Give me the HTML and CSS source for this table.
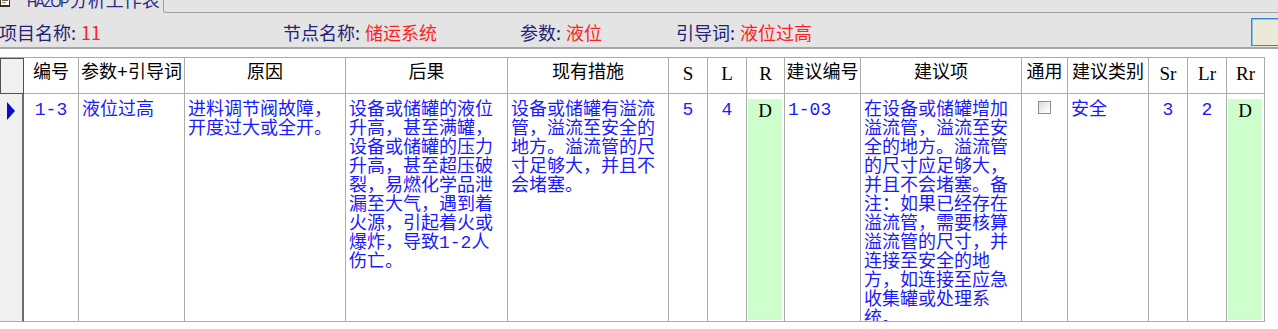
FILE: index.html
```html
<!DOCTYPE html>
<html lang="zh-CN">
<head>
<meta charset="utf-8">
<title>HAZOP分析工作表</title>
<link rel="stylesheet" href="styles.css">
</head>
<body>
<div class="app">
  <div class="tabstrip">
    <div class="tab">
      <svg class="tab-icon" width="11" height="12" viewBox="0 0 11 12">
        <rect x="0.5" y="0.5" width="9" height="10" fill="#ffffff" stroke="#303030"/>
        <rect x="2" y="2" width="6" height="1" fill="#606060"/>
        <rect x="2" y="4" width="6" height="1" fill="#606060"/>
        <rect x="2" y="6" width="4" height="1" fill="#c08020"/>
        <rect x="0" y="9" width="10" height="2" fill="#303030"/>
      </svg>
      <span class="tab-title"><span class="tab-latin">HAZOP</span>分析工作表</span>
    </div>
    <div class="tab-rest"></div>
  </div>

  <div class="infobar">
    <div class="field f-project"><span class="label">项目名称:</span><span class="value">11</span></div>
    <div class="field f-node"><span class="label">节点名称:</span><span class="value">储运系统</span></div>
    <div class="field f-param"><span class="label">参数:</span><span class="value">液位</span></div>
    <div class="field f-guide"><span class="label">引导词:</span><span class="value">液位过高</span></div>
    <div class="infobox"></div>
  </div>

  <div class="grid">
    <div class="cell corner"></div>
    <div class="cell hcell">编号</div>
    <div class="cell hcell">参数+引导词</div>
    <div class="cell hcell">原因</div>
    <div class="cell hcell">后果</div>
    <div class="cell hcell">现有措施</div>
    <div class="cell hcell serif">S</div>
    <div class="cell hcell serif">L</div>
    <div class="cell hcell serif">R</div>
    <div class="cell hcell">建议编号</div>
    <div class="cell hcell">建议项</div>
    <div class="cell hcell">通用</div>
    <div class="cell hcell">建议类别</div>
    <div class="cell hcell serif">Sr</div>
    <div class="cell hcell serif">Lr</div>
    <div class="cell hcell serif">Rr</div>

    <div class="cell indicator">
      <svg width="8" height="18" viewBox="0 0 8 18"><polygon points="0,0 8,9 0,18" fill="#0a0ad0"/></svg>
    </div>
    <div class="cell dcell center">1-3</div>
    <div class="cell dcell">液位过高</div>
    <div class="cell dcell">进料调节阀故障，开度过大或全开。</div>
    <div class="cell dcell">设备或储罐的液位升高，甚至满罐，设备或储罐的压力升高，甚至超压破裂，易燃化学品泄漏至大气，遇到着火源，引起着火或爆炸，导致1-2人伤亡。</div>
    <div class="cell dcell">设备或储罐有溢流管，溢流至安全的地方。溢流管的尺寸足够大，并且不会堵塞。</div>
    <div class="cell dcell center">5</div>
    <div class="cell dcell center">4</div>
    <div class="cell rcell"><div class="green serif">D</div></div>
    <div class="cell dcell">1-03</div>
    <div class="cell dcell">在设备或储罐增加溢流管，溢流至安全的地方。溢流管的尺寸应足够大，并且不会堵塞。备注：如果已经存在溢流管，需要核算溢流管的尺寸，并连接至安全的地方，如连接至应急收集罐或处理系统。</div>
    <div class="cell dcell center"><span class="checkbox"></span></div>
    <div class="cell dcell">安全</div>
    <div class="cell dcell center">3</div>
    <div class="cell dcell center">2</div>
    <div class="cell rcell"><div class="green serif">D</div></div>
  </div>
</div>
</body>
</html>
```

FILE: styles.css
```css
html, body {
  margin: 0;
  padding: 0;
  background: #ffffff;
  overflow: hidden;
}

.app {
  width: 1278px;
  height: 329px;
  overflow: hidden;
  font-family: "Noto Sans CJK SC", "Noto Sans", sans-serif;
}

/* ---------- tab strip ---------- */
.tabstrip {
  display: flex;
  height: 13px;
  background: #e4e4e4;
  overflow: hidden;
}

.tab {
  width: 163px;
  display: flex;
  align-items: flex-start;
  overflow: hidden;
}

.tab-icon {
  display: block;
  margin-top: -4px;
  flex: none;
}

.tab-title {
  margin-left: 16px;
  margin-top: -10px;
  font-size: 18px;
  line-height: 18px;
  color: #2a2a8c;
  white-space: nowrap;
}

.tab-latin {
  font-family: "Liberation Sans", sans-serif;
  font-size: 14px;
  letter-spacing: -1.5px;
  margin-right: 2px;
}

.tab-rest {
  flex: 1;
  border-left: 1px solid #a0a0a0;
  border-bottom: 1px solid #a0a0a0;
  border-bottom-left-radius: 3px;
}

/* ---------- info bar ---------- */
.infobar {
  display: flex;
  align-items: center;
  box-sizing: border-box;
  height: 36px;
  padding-top: 4px;
  background: #e4e4e4;
  border-bottom: 2px solid #a6a6a6;
  font-size: 18px;
  line-height: 22px;
  white-space: nowrap;
}

.field {
  display: flex;
  align-items: center;
  flex: none;
}

.f-project { width: 284px; margin-left: -1px; }
.f-node { width: 237px; }
.f-param { width: 156px; }
.f-guide { flex: 1; }

.label {
  color: #222278;
}

.value {
  color: #ff2222;
  margin-left: 5px;
}

.infobox {
  flex: none;
  box-sizing: border-box;
  width: 30px;
  height: 28px;
  margin-right: -3px;
  background: #ece9d8;
  border: 1px solid #2f8ad6;
  box-shadow: inset 1px 1px 0 #8fc0ea;
}

/* ---------- grid ---------- */
.grid {
  display: grid;
  grid-template-columns: 24px 55px 106px 161px 162px 161px 39px 39px 38px 76px 161px 46px 81px 39px 39px 38px;
  grid-template-rows: 36px 228px;
  width: max-content;
  margin-top: 8px;
  border-top: 1px solid #acacac;
  font-family: "Liberation Mono", "Noto Sans CJK SC", monospace;
  font-size: 18px;
  line-height: 19px;
}

.cell {
  box-sizing: border-box;
  border-right: 1px solid #acacac;
  border-bottom: 1px solid #acacac;
  overflow: hidden;
  background: #ffffff;
}

.corner {
  background: #f0f0f0;
  border: 1px solid #505050;
}

.hcell {
  padding-top: 6px;
  text-align: center;
  color: #000000;
  white-space: nowrap;
}

.serif {
  font-family: "Liberation Serif", "Noto Sans CJK SC", serif;
  font-size: 19px;
}

.indicator {
  background: #f0f0f0;
  border-right: 2px solid #6c6c6c;
  padding: 8px 0 0 7px;
}

.indicator svg {
  display: block;
}

.dcell {
  padding: 7px 6px 0 3px;
  color: #1a1aff;
}

.dcell.center {
  padding-left: 0;
  padding-right: 0;
  text-align: center;
}

.rcell {
  padding: 5px 2px 1px 1px;
}

.green {
  box-sizing: border-box;
  height: 100%;
  padding-top: 2px;
  background: #ccffcc;
  color: #000000;
  text-align: center;
}

.checkbox {
  display: inline-block;
  box-sizing: border-box;
  width: 13px;
  height: 13px;
  margin-top: 0;
  vertical-align: top;
  border: 1px solid #8f8f8f;
  background: linear-gradient(135deg, #d8d8d8 0%, #f4f4f4 60%, #ffffff 100%);
}
```
